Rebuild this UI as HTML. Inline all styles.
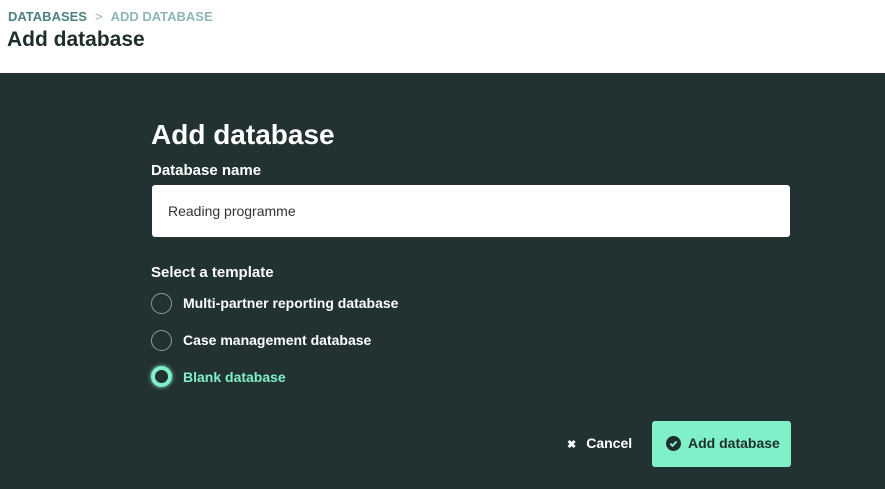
<!DOCTYPE html>
<html><head><meta charset="utf-8"><style>
*{margin:0;padding:0;box-sizing:border-box}
body{width:885px;height:489px;overflow:hidden;font-family:"Liberation Sans",sans-serif;background:#223131;position:relative}
.top{position:absolute;left:0;top:0;width:885px;height:73px;background:#fff}
.bc{position:absolute;left:8px;top:9px;font-size:13px;font-weight:bold;color:#4f8080;white-space:nowrap}
.bc span.s{color:#8fb5b5}
.bc span.c{color:#8fb5b5;margin:0 8px;font-weight:normal}
.h1{position:absolute;left:7px;top:28px;font-size:21px;font-weight:bold;color:#1e2d2d}
.t{position:absolute;color:#fff;white-space:nowrap}
.h2{left:151px;top:119px;font-size:28px;font-weight:bold}
.lab{left:151px;top:162px;font-size:15px;font-weight:bold}
.inp{position:absolute;left:152px;top:185px;width:638px;height:52px;background:#fff;border-radius:3px;font-size:14px;color:#333;padding:18px 0 0 16px}
.sel{left:151px;top:264px;font-size:15px;font-weight:bold}
.r{position:absolute;left:151px;width:21px;height:21px;border:1.5px solid #7fa39a;border-radius:50%}
.rl{position:absolute;left:183px;font-size:14px;font-weight:bold;color:#fff;white-space:nowrap}
.on{border:4px solid #80f0c8;background:#223131;box-shadow:0 0 4px #80f0c8}
.cancel{position:absolute;left:567px;top:435px;font-size:14px;font-weight:bold;color:#fff;white-space:nowrap}
.btn{position:absolute;left:652px;top:421px;width:139px;height:46px;background:#80f0c8;border-radius:3px;font-size:14px;font-weight:bold;color:#1e2d2d;padding:14px 0 0 14px;white-space:nowrap}
.ck{display:inline-block;width:15px;height:15px;border-radius:50%;background:#1e2d2d;vertical-align:-3px;margin-right:7px;position:relative}
</style></head><body>
<div class="top">
<div class="bc">DATABASES<span class="c">&gt;</span><span class="s">ADD DATABASE</span></div>
<div class="h1">Add database</div>
</div>
<div class="t h2">Add database</div>
<div class="t lab">Database name</div>
<div class="inp">Reading programme</div>
<div class="t sel">Select a template</div>
<div class="r" style="top:293px"></div><div class="rl" style="top:295px">Multi-partner reporting database</div>
<div class="r" style="top:330px"></div><div class="rl" style="top:332px">Case management database</div>
<div class="r on" style="top:366px"></div><div class="rl" style="top:369px;color:#80f0c8">Blank database</div>
<div class="cancel"><span style="font-size:11px;margin-right:10px">✖</span>Cancel</div>
<div class="btn"><span class="ck"><svg width="15" height="15" viewBox="0 0 15 15" style="position:absolute;left:0;top:0"><path d="M4.3 7.6l2.2 2.2 4.2-4.4" stroke="#80f0c8" stroke-width="2" fill="none"/></svg></span>Add database</div>
</body></html>
